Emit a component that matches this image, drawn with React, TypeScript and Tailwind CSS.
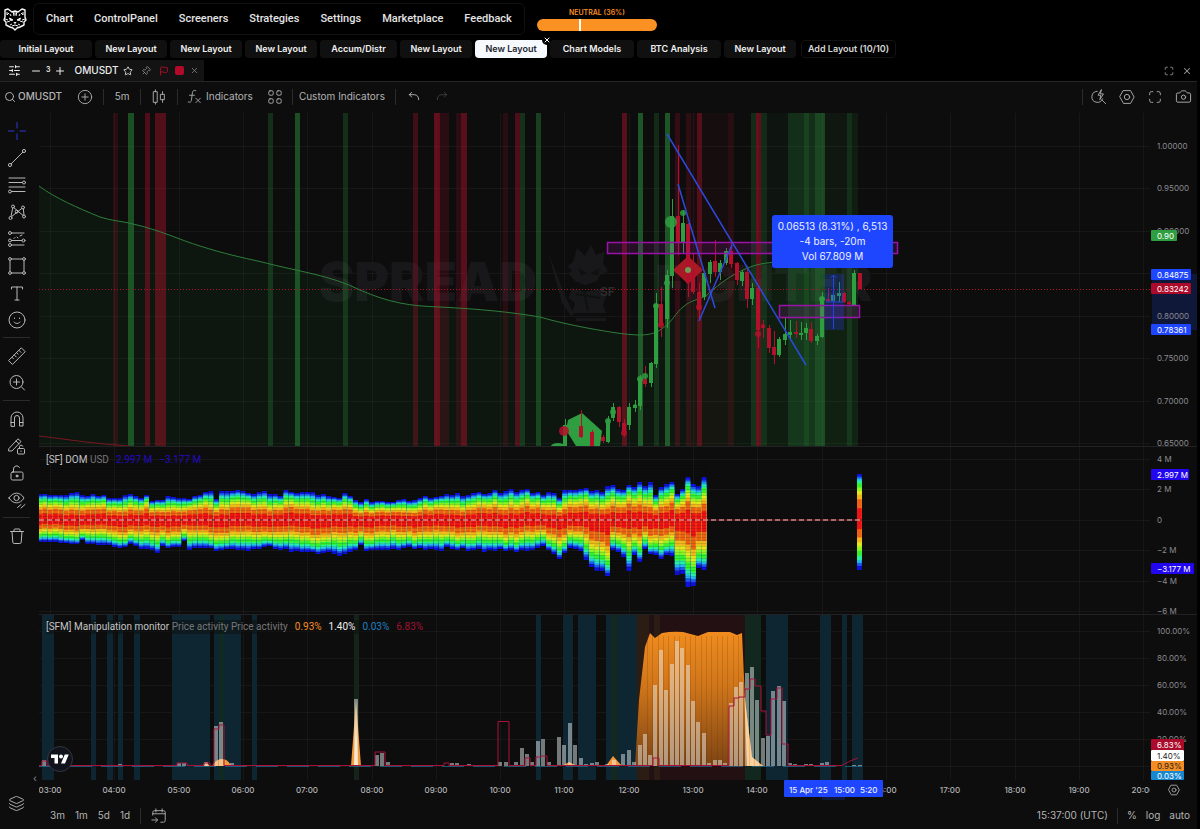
import type { ReactNode } from "react";
import { Camera, Flag, Layers, Maximize, Minus, Pin, Plus, Search, SlidersHorizontal, Star, X } from "lucide-react";

const GREEN = "#2f9e41";
const RED = "#b3102c";
const TEAL = "#0d2631";

const navItems = ["Chart", "ControlPanel", "Screeners", "Strategies", "Settings", "Marketplace", "Feedback"];

const layouts = [
  { name: "Initial Layout", width: "w-[92px]" },
  { name: "New Layout", width: "w-[72px]" },
  { name: "New Layout", width: "w-[72px]" },
  { name: "New Layout", width: "w-[72px]" },
  { name: "Accum/Distr", width: "w-[77px]" },
  { name: "New Layout", width: "w-[72px]" },
  { name: "New Layout", width: "w-[72px]", active: true },
  { name: "Chart Models", width: "w-[84px]" },
  { name: "BTC Analysis", width: "w-[84px]" },
  { name: "New Layout", width: "w-[72px]" },
];

// [x, width, color, opacity]
type Band = [number, number, string, number];

const priceBands: Band[] = [
  [113, 5, RED, 0.18], [128, 6, GREEN, 0.45], [145, 5, RED, 0.4], [155, 11, RED, 0.42],
  [268, 5, GREEN, 0.24], [295, 5, GREEN, 0.45], [343, 5, GREEN, 0.24],
  [413, 5, RED, 0.3], [434, 6, RED, 0.5], [440, 9, RED, 0.18], [456, 5, RED, 0.18], [461, 6, RED, 0.46],
  [503, 5, RED, 0.18], [515, 5, RED, 0.4], [520, 5, GREEN, 0.25], [536, 5, GREEN, 0.35],
  [622, 5, RED, 0.46], [638, 5, GREEN, 0.5], [654, 5, GREEN, 0.2], [665, 5, GREEN, 0.5],
  [675, 5, RED, 0.24], [686, 5, RED, 0.2], [691, 6, RED, 0.08], [697, 5, RED, 0.44], [702, 26, RED, 0.05],
  [728, 6, RED, 0.17], [751, 5, GREEN, 0.2], [756, 5, RED, 0.5], [761, 6, GREEN, 0.2], [767, 21, GREEN, 0.05],
  [788, 16, GREEN, 0.24], [804, 5, GREEN, 0.36], [809, 6, GREEN, 0.24], [815, 10, GREEN, 0.4],
  [825, 22, GREEN, 0.08], [847, 5, GREEN, 0.24], [852, 6, GREEN, 0.1],
];

// [x, high, body top, body bottom, low, up]
const candles: number[][] = [
  [565, 419, 425, 446, 446, 1], [581, 410, 426, 437, 438, 0], [592, 430, 432, 446, 446, 0], [603, 435, 437, 441, 443, 0],
  [608, 416, 420, 442, 443, 1], [613, 403, 407, 418, 421, 1], [619, 406, 407, 422, 427, 0], [624, 419, 423, 432, 437, 0],
  [629, 403, 407, 425, 430, 1], [635, 400, 405, 408, 412, 1], [640, 375, 378, 406, 410, 1], [645, 366, 379, 384, 387, 0],
  [651, 362, 363, 383, 387, 1], [656, 293, 304, 364, 368, 1], [661, 287, 304, 325, 337, 0], [667, 270, 275, 319, 328, 1],
  [672, 199, 216, 276, 288, 1], [678, 145, 216, 243, 255, 0], [683, 210, 223, 243, 253, 1], [688, 223, 224, 283, 297, 0],
  [693, 253, 270, 292, 294, 0], [699, 283, 292, 310, 320, 0], [704, 271, 273, 297, 300, 1], [710, 260, 262, 274, 283, 1],
  [715, 240, 261, 272, 277, 0], [720, 260, 263, 272, 280, 1], [726, 248, 251, 263, 265, 1], [731, 242, 251, 264, 268, 0],
  [737, 262, 263, 280, 285, 0], [742, 270, 272, 281, 286, 1], [747, 268, 272, 299, 308, 0], [752, 283, 288, 299, 305, 1],
  [758, 286, 288, 330, 348, 0], [763, 320, 325, 328, 338, 0], [769, 325, 328, 348, 353, 0], [774, 331, 347, 355, 364, 0],
  [779, 337, 339, 355, 357, 1], [785, 318, 334, 340, 345, 1], [790, 320, 332, 335, 340, 1], [796, 321, 332, 334, 338, 0],
  [801, 322, 333, 335, 340, 1], [806, 323, 328, 333, 340, 1], [811, 322, 329, 341, 343, 0], [817, 334, 336, 341, 345, 1],
  [822, 292, 297, 337, 338, 1], [828, 288, 299, 301, 302, 0], [833, 288, 295, 301, 303, 1], [839, 282, 293, 296, 302, 1],
  [844, 292, 293, 302, 303, 0], [849, 301, 302, 304, 305, 0], [854, 270, 273, 305, 305, 1], [860, 273, 273, 289, 289, 0],
];

// [cx, cy, r, up]
const markers: number[][] = [
  [671, 222, 6, 1], [683, 213, 3, 1], [667, 283, 3, 1], [656, 306, 3, 1], [661, 325, 3, 0], [640, 379, 3, 1],
  [645, 376, 3, 1], [624, 433, 3, 0], [564, 431, 5, 0], [608, 421, 3, 1], [613, 412, 3, 1], [635, 406, 2, 1],
  [603, 439, 2, 0], [758, 334, 3, 0], [763, 326, 2, 0], [699, 307, 3, 0], [822, 299, 3, 1], [572, 422, 3, 1],
];

const domUp = [
  26, 26, 25, 25, 25, 25, 27, 28, 25, 24, 26, 24, 25, 22, 22, 22, 25, 26, 24, 22, 25, 19, 20, 20, 24, 23, 22, 22, 21, 24, 25,
  28, 29, 21, 29, 29, 29, 30, 29, 27, 26, 28, 29, 26, 26, 24, 30, 28, 27, 28, 28, 28, 25, 26, 24, 23, 22, 27, 24, 20, 18, 21,
  18, 19, 19, 18, 18, 20, 21, 19, 20, 22, 24, 22, 23, 24, 26, 25, 27, 24, 25, 27, 28, 26, 27, 30, 27, 29, 31, 28, 30, 31, 27,
  28, 25, 28, 27, 22, 30, 30, 30, 31, 32, 29, 30, 28, 34, 35, 31, 30, 35, 33, 38, 34, 38, 25, 33, 36, 38, 26, 31, 43, 36, 34,
  43,
];

const domDown = [
  22, 22, 22, 22, 23, 23, 24, 24, 20, 24, 24, 25, 25, 25, 27, 28, 27, 24, 26, 29, 29, 30, 33, 26, 28, 27, 27, 21, 30, 28, 28,
  28, 28, 31, 30, 29, 29, 30, 30, 31, 29, 29, 27, 26, 29, 30, 29, 32, 31, 32, 32, 32, 34, 33, 32, 34, 36, 34, 32, 30, 25, 31,
  30, 30, 30, 30, 29, 30, 28, 27, 29, 28, 30, 29, 30, 31, 27, 29, 30, 28, 31, 30, 29, 32, 30, 31, 29, 31, 30, 32, 30, 31, 30,
  28, 26, 30, 34, 39, 33, 28, 29, 31, 40, 47, 51, 51, 56, 30, 32, 37, 51, 35, 42, 29, 34, 35, 39, 35, 36, 55, 54, 67, 66, 48,
  50,
];

// share of the column, counted from the middle outwards
const heat: [number, string][] = [
  [1, "#0d12dc"], [0.93, "#1d5cf0"], [0.88, "#22b8ec"], [0.83, "#27f0a0"], [0.76, "#35f32a"], [0.66, "#96f322"],
  [0.58, "#e6e51e"], [0.5, "#f3b51a"], [0.4, "#ee6014"], [0.22, "#ee1216"],
];

const manipBands: Band[] = [
  [42, 12, TEAL, 1], [91, 5, TEAL, 1], [107, 6, TEAL, 1], [118, 5, TEAL, 1], [134, 6, TEAL, 1],
  [172, 38, TEAL, 1], [214, 27, TEAL, 1], [219, 5, "#0f2a22", 1], [252, 5, TEAL, 1], [354, 5, "#14241a", 1],
  [536, 5, TEAL, 1], [563, 10, TEAL, 1], [578, 18, TEAL, 1], [606, 31, TEAL, 1], [612, 5, "#14281d", 1],
  [637, 12, "#2c1d14", 1], [649, 5, "#231012", 1], [654, 6, "#2c1d14", 1], [660, 85, "#231012", 1], [745, 16, "#12281f", 1],
  [766, 22, TEAL, 1], [820, 11, TEAL, 1], [842, 5, TEAL, 1], [852, 11, TEAL, 1],
];

// [x, height]
const volume: number[][] = [
  [42, 6], [118, 2], [177, 3], [182, 3], [204, 4], [214, 40], [219, 44], [230, 3], [278, 1], [354, 67], [375, 11], [380, 13],
  [386, 4], [391, 1], [450, 3], [455, 3], [467, 2], [498, 4], [504, 4], [514, 4], [520, 18], [525, 12], [530, 4], [536, 25],
  [541, 27], [547, 4], [557, 29], [562, 21], [568, 43], [573, 21], [579, 8], [584, 2], [590, 3], [595, 4], [605, 2], [612, 6],
  [621, 12], [627, 16], [632, 4], [638, 21], [643, 32], [648, 11], [653, 81], [659, 116], [664, 76], [670, 102], [675, 125],
  [680, 118], [686, 101], [691, 65], [696, 44], [702, 33], [707, 3], [713, 6], [718, 6], [723, 3], [729, 63], [734, 79],
  [739, 84], [745, 93], [750, 99], [755, 66], [761, 28], [766, 30], [771, 75], [777, 80], [782, 65], [788, 3], [793, 2],
  [804, 2], [809, 2], [820, 3], [825, 4], [831, 1], [852, 1], [858, 1],
];

const hours = Array.from({ length: 18 }, (_, i) => ({ label: `${String(i + 3).padStart(2, "0")}:00`, x: Math.round(50 + i * 64.3) }));

function Icon({ children, size = 18 }: { children: ReactNode; size?: number }) {
  return (
    <svg
      width={size}
      height={size}
      viewBox="0 0 18 18"
      fill="none"
      stroke="currentColor"
      strokeWidth="1"
      strokeLinecap="round"
      strokeLinejoin="round"
      aria-hidden="true"
    >
      {children}
    </svg>
  );
}

function SettingsHex() {
  return (
    <>
      <path d="M5 1.8h8L17 9l-4 7.2H5L1 9z" />
      <circle cx="9" cy="9" r="3" />
    </>
  );
}

const toolGroups: { label: string; icon: ReactNode }[][] = [
  [
    { label: "Crosshair", icon: <path d="M9 0v6M9 12v6M0 9h6M12 9h6" stroke="#2c39d6" /> },
    { label: "Trend line", icon: <><circle cx="2" cy="16" r="1.6" /><circle cx="16" cy="2" r="1.6" /><path d="M3.2 14.8 14.8 3.2" /></> },
    { label: "Fib retracement", icon: <><path d="M1 2h16M1 6.5h13.5M1 11h16M3.5 15.5H17" /><circle cx="16" cy="6.5" r="1.5" /><circle cx="2" cy="15.5" r="1.5" /></> },
    { label: "Patterns", icon: <><path d="m3 13.5 1.7-8.5M6 4.8l9 7.6M15.3 6l.7 6M13.7 5.5l-10 8" /><circle cx="5" cy="3.5" r="1.5" /><circle cx="15" cy="4.5" r="1.5" /><circle cx="8.7" cy="8.7" r="1.5" /><circle cx="2.5" cy="15" r="1.5" /><circle cx="16" cy="13.5" r="1.5" /></> },
    { label: "Forecasting", icon: <><circle cx="2" cy="3" r="1.5" /><circle cx="2" cy="10.5" r="1.5" /><circle cx="2" cy="15" r="1.5" /><circle cx="15.5" cy="10.5" r="1.5" /><path d="M3.5 3H16M3.5 10.5H14M3.5 15H16" /><path d="m6 8.500 1-1M9 7l1 1M12 6l2-1" /></> },
    { label: "Shapes", icon: <><path d="M3.5 2h11M3.5 16h11M2 3.5v11M16 3.5v11" /><circle cx="2" cy="2" r="1.4" /><circle cx="16" cy="2" r="1.4" /><circle cx="2" cy="16" r="1.4" /><circle cx="16" cy="16" r="1.4" /></> },
    { label: "Text", icon: <path d="M3.5 5V3h11v2M9 3v13M7 16h4" /> },
    { label: "Emoji", icon: <><circle cx="9" cy="9" r="8" /><path d="M6.5 7v.5M11.5 7v.5M6 11c1.500 2 4.500 2 6 0" /></> },
  ],
  [
    { label: "Measure", icon: <path d="M.8 13.300 13.300.8l3.900 3.900L4.700 17.200zM4 10.300l1.500 1.500M6.300 8l2 2M8.600 5.700l1.500 1.500M11 3.400l2 2" /> },
    { label: "Zoom in", icon: <><circle cx="8.5" cy="8" r="6.5" /><path d="m13.300 12.700 3.200 3.300M5.5 8h6M8.5 5v6" /></> },
  ],
  [
    { label: "Magnet", icon: <path d="M3 16V8a6 6 0 0 1 12 0v8h-3.5V8a2.500 2.500 0 0 0-5 0v8zM3 12.500h3.500M11.500 12.500H15" /> },
    { label: "Stay in drawing mode", icon: <><path d="M1 11.500 10 1.800l3 2.700L4 14H1zM8 4l3 2.800" /><rect x="9.5" y="11.5" width="7" height="5.5" rx="1" /><path d="M11.500 11.500V9.800a1.700 1.700 0 0 1 3.300-.5M13 14v.5" /></> },
    { label: "Lock all drawings", icon: <><rect x="3" y="8" width="12" height="8" rx="1.5" /><path d="M5.500 8V5a3.200 3.200 0 0 1 6-1.500" /><circle cx="9" cy="12" r="1" fill="currentColor" /></> },
    { label: "Hide all drawings", icon: <><path d="M1 7c4-6.500 11-6.500 15 0-4 6.500-11 6.500-15 0z" /><circle cx="8.5" cy="7" r="2.6" /><path d="m9.500 16.500 3.500-3M13 17l4-3.500" /></> },
  ],
  [
    { label: "Remove objects", icon: <path d="M2.500 4.500h13M6 4.500V2.800Q6 2 7 2h4q1 0 1 .8v1.700M4 4.500l.8 10.700q.1 1.300 1.400 1.300h5.600q1.300 0 1.400-1.300L14 4.500" /> },
  ],
];

function CatLogo() {
  return (
    <svg width="24" height="24" viewBox="0 0 24 24" fill="none" stroke="#f5f5f5" strokeLinejoin="round" aria-hidden="true">
      <path d="M2 10V3l3-1 4 3 3-1 3 1 4-3 3 1v7l1 3-2 2v3l-4 2-3 1-2 2-2-2-3-1-4-2v-3l-2-2z" strokeWidth="1.4" />
      <path d="M4 5v3l2-2M20 5v3l-2-2M10 4l1 5M14 4l-1 5M12 5v3M7 7l1 2M17 7l-1 2M2 12l3 1M22 12l-3 1M4 15l3-1M20 15l-3-1M7 18l2-1M17 18l-2-1M9 19l3-1 3 1" />
      <path d="m6.500 11 3.500 2-2.500.5zM17.500 11 14 13l2.500.5zM11 15.500h2l-1 1z" fill="#f5f5f5" />
    </svg>
  );
}

function Header() {
  return (
    <header className="flex h-[38px] items-start">
      <a href="#" aria-label="Home" className="mt-[7px] ml-[3px]">
        <CatLogo />
      </a>
      <nav className="mt-[3px] ml-[6px] flex h-8 items-center gap-[21px] rounded-md border border-[#111113] px-3 font-['Roboto',sans-serif] text-[11px] font-medium text-[#e4e4e4]">
        {navItems.map((item) => (
          <a key={item} href="#">{item}</a>
        ))}
      </nav>
      <div className="mt-2 ml-3 w-[120px] text-center">
        <p className="text-[7px] leading-[9px] font-semibold text-[#f58d22]">NEUTRAL (36%)</p>
        <div className="mt-[2px] flex h-3 rounded-full bg-[#fb9023]">
          <div className="w-[37%] border-r-2 border-white" />
        </div>
      </div>
    </header>
  );
}

function LayoutTabs() {
  return (
    <div className="flex h-[22px] items-center gap-[3px] text-[9px] font-semibold">
      {layouts.map((tab, i) => (
        <div key={i} className={`relative ${tab.width}`}>
          <button
            className={
              tab.active
                ? "h-[18px] w-full rounded-[4px] bg-[#f6f9fd] text-[#1c2430]"
                : "h-[18px] w-full rounded-[4px] bg-[#101010] text-[#f0f0f0]"
            }
          >
            {tab.name}
          </button>
          {tab.active && (
            <button aria-label="Close layout" className="absolute -top-[5px] -right-[5px] rounded-full bg-black p-px text-white">
              <X size={8} strokeWidth={3} />
            </button>
          )}
        </div>
      ))}
      <button className="ml-[2px] h-[18px] w-[95px] rounded-[4px] border border-[#121212] text-[#d8d8d8]">Add Layout (10/10)</button>
    </div>
  );
}

function WindowBar() {
  return (
    <div className="flex h-[21px] items-center justify-between">
      <div className="flex h-full w-[204px] items-center bg-[#131313] pl-[8px] text-[#ededed]">
        <button aria-label="Adjust"><SlidersHorizontal size={13} /></button>
        <button aria-label="Decrease" className="ml-[9px]"><Minus size={12} /></button>
        <span className="ml-1 text-[7px] font-semibold">3</span>
        <button aria-label="Increase" className="ml-1"><Plus size={12} /></button>
        <span className="ml-2 text-[10px] font-medium">OMUSDT</span>
        <button aria-label="Favourite" className="ml-1"><Star size={10} /></button>
        <button aria-label="Pin" className="ml-2 text-[#8a8a8a]"><Pin size={10} className="rotate-45" /></button>
        <button aria-label="Flag" className="ml-2 text-[#c3102c]"><Flag size={10} /></button>
        <button aria-label="Colour" className="ml-[6px] size-[9px] rounded-[2px] bg-[#b40a2a]" />
        <button aria-label="Close tab" className="ml-[6px] text-[#8a8a8a]"><X size={9} /></button>
      </div>
      <div className="flex gap-2 pr-2 text-[#9a9a9a]">
        <button aria-label="Maximize"><Maximize size={10} /></button>
        <button aria-label="Close"><X size={10} strokeWidth={2.5} /></button>
      </div>
    </div>
  );
}

function Divider() {
  return <span className="h-4 w-px bg-[#2b2b2b]" />;
}

function Toolbar() {
  return (
    <div className="mr-[3px] flex h-8 items-center justify-between border-t border-[#262628] bg-[#0d0d0d] pb-[2px] text-[10px] text-[#b4b4b4]">
      <div className="flex items-center">
        <button className="ml-[4px] flex items-center gap-[2px] font-medium"><Search size={12} />OMUSDT</button>
        <button aria-label="Compare" className="mr-[10px] ml-[15px]">
          <Icon size={16}><circle cx="9" cy="9" r="7.5" /><path d="M9 5.500v7M5.500 9h7" /></Icon>
        </button>
        <Divider />
        <button className="w-9">5m</button>
        <Divider />
        <button aria-label="Candles" className="flex w-9 justify-center">
          <Icon size={16}><path d="M5 1v2M5 15v2M3 3h4v12H3zM13 3v3M13 12v3M11 6h4v6h-4z" /></Icon>
        </button>
        <Divider />
        <button className="ml-[9px] flex items-center gap-1">
          <Icon size={15}><path d="M10.500 2C8 1 6.800 2 6.500 4.500l-1.200 9C5 16 3.500 16.500 1.500 15.500M3 7.500h6M10.500 11l5.500 5.500M16 11l-5.500 5.500" /></Icon>
          Indicators
        </button>
        <button aria-label="Layouts" className="mr-[9px] ml-[14px]">
          <Icon size={16}><rect x="2" y="2" width="5" height="5" rx="1.5" /><rect x="11" y="2" width="5" height="5" rx="1.5" /><rect x="2" y="11" width="5" height="5" rx="1.5" /><rect x="11" y="11" width="5" height="5" rx="1.5" /></Icon>
        </button>
        <Divider />
        <button className="mr-1 px-[6px]">Custom Indicators</button>
        <Divider />
        <button aria-label="Undo" className="ml-3">
          <Icon size={12}><path d="M5.500 2 2 5.500 5.500 9M2 5.500h7.500Q16 6 16 13" strokeWidth="1.4" /></Icon>
        </button>
        <button aria-label="Redo" className="ml-4 text-[#404040]">
          <Icon size={12}><path d="M12.500 2 16 5.500 12.500 9M16 5.500H8.500Q2 6 2 13" strokeWidth="1.4" /></Icon>
        </button>
      </div>
      <div className="flex items-center gap-3 pr-[5px]">
        <Divider />
        <button aria-label="Quick search" className="-ml-1">
          <Icon size={16}><path d="M7 2.600A6.200 6.200 0 1 0 13 11M12.500 12.500l4 4M11.500 1 8 7h3l-1 5 4-6.500h-3z" /></Icon>
        </button>
        <button aria-label="Settings"><Icon size={16}><SettingsHex /></Icon></button>
        <button aria-label="Fullscreen">
          <Icon size={16}><path d="M3 6.500V5q0-2 2-2h1.500M11.500 3H13q2 0 2 2v1.500M15 11.500V13q0 2-2 2h-1.500M6.500 15H5q-2 0-2-2v-1.500" /></Icon>
        </button>
        <button aria-label="Take a snapshot"><Camera size={17} strokeWidth={1.3} /></button>
      </div>
    </div>
  );
}

function SideTools() {
  return (
    <aside className="flex w-[33px] shrink-0 flex-col items-center pt-1 text-[#b8b8b8]">
      {toolGroups.map((group, i) => (
        <div key={i} className="flex flex-col items-center">
          {i > 0 && <span className="my-1 h-px w-[27px] bg-[#2b2b2b]" />}
          {group.map((tool) => (
            <button key={tool.label} aria-label={tool.label} className="flex h-[27px] w-[33px] items-center justify-center">
              <Icon>{tool.icon}</Icon>
            </button>
          ))}
        </div>
      ))}
      <button aria-label="Object tree" className="mt-auto mb-[17px]"><Layers size={17} strokeWidth={1.3} /></button>
    </aside>
  );
}

function Grid({ top, height, rows }: { top: number; height: number; rows: number[] }) {
  return (
    <g stroke="#ffffff" strokeOpacity="0.045">
      {hours.map(({ x }) => <path key={x} d={`M${x}.5 ${top}v${height}`} />)}
      {rows.map((y) => <path key={y} d={`M39 ${y}.5h3000`} />)}
    </g>
  );
}

function Bands({ bands, top, height }: { bands: Band[]; top: number; height: number }) {
  return (
    <>
      {bands.map(([x, w, fill, opacity]) => (
        <rect key={x} x={x} y={top} width={w} height={height} fill={fill} opacity={opacity} />
      ))}
    </>
  );
}

function Ticks({ ticks }: { ticks: [string, number][] }) {
  return (
    <>
      {ticks.map(([label, y]) => (
        <text key={label} x="1157" y={y + 3} fill="#8b8b8f" fontSize="8">{label}</text>
      ))}
    </>
  );
}

function Tag({ y, w = 40, h = 11, fill, color = "#fff", children }: { y: number; w?: number; h?: number; fill: string; color?: string; children: string }) {
  return (
    <>
      <rect x="1151" y={y} width={w} height={h} rx="1" fill={fill} />
      <text x="1157" y={y + h / 2 + 3} fill={color} fontSize="8">{children}</text>
    </>
  );
}

// Chart area with its value scale; both are drawn in one shared coordinate space.
function Pane({ top, className, plot, axis, children }: { top: number; className: string; plot: ReactNode; axis: ReactNode; children?: ReactNode }) {
  return (
    <section className={`relative flex ${className}`}>
      <svg className="h-full min-w-0 flex-1"><g transform={`translate(-39 ${-top})`}>{plot}</g></svg>
      <svg className="h-full w-[47px] shrink-0"><g transform={`translate(-1150 ${-top})`}>{axis}</g></svg>
      {children}
    </section>
  );
}

function Watermark() {
  return (
    <g fill="#18181a">
      <g fontWeight="900" fontSize="53">
        <text x="319" y="301">SPREAD</text>
        <text x="655" y="301" fontSize="50">FIGHTER</text>
      </g>
      <path d="M573 262l4-14 8 8 6-11 5 10 9-4-2 12 5 8-8 4-3 6-12 4-10-4-6-7 3-4-5-3z" />
      <path d="M572 288l12 4 16-3 6 8-3 8 3 8h-34l3-10-6-5z" />
      <path d="M548 252l18 46 8 16-3 2-9-13zM576 318h30v3h-30z" />
      <path d="M580 270l5 3-4 1zM598 270l-5 3 4 1zM576 294l24 4M584 291l4 20" stroke="#0e120e" strokeWidth="2" />
      <text x="600" y="296" fill="#2a2a2b" fontSize="12" fontWeight="700">SF</text>
    </g>
  );
}

const maLine =
  "M39 186C55 198 78 208 100 217C112 221 122 221 133 224C160 230 180 240 200 246C225 254 240 257 262 262C300 272 330 275 360 290C390 303 410 306 440 307C480 309 510 312 540 317C560 323 590 329 617 333C640 336 650 336 660 330C672 323 676 312 683 307C692 299 700 300 707 295C720 283 735 272 753 266C765 262 775 263 785 260C810 255 840 240 858 236";

function PricePane() {
  return (
    <Pane
      top={113}
      className="h-[334px] border-b border-[#222226]"
      plot={
        <>
          <Grid top={113} height={334} rows={[146, 188, 231, 273, 316, 358, 401, 443]} />
          <Watermark />
          <path d={`${maLine}V447H39Z`} fill="#1f7a2c" fillOpacity="0.1" />
          <Bands bands={priceBands} top={113} height={334} />
          <path d={maLine} fill="none" stroke="#2f7d3a" />
          <path d="M39 436C65 439 95 444 130 446" fill="none" stroke="#7a1622" />
          <path d="M39 289.5h3000" stroke="#b0122c" strokeDasharray="1 2" />
          <path d="M568 420l14-7 20 18-2 15h-24l-10-16z" fill={GREEN} />
          <ellipse cx="558" cy="446" rx="7" ry="3" fill={GREEN} />
          <path d="M688 256l15 14-15 14-15-14z" fill="#a81a24" />
          {candles.map(([x, high, open, close, low, up]) => (
            <g key={x} fill={up ? GREEN : RED}>
              <rect x={x} y={high} width="1" height={low - high} />
              <rect x={x - 2} y={open} width="4" height={Math.max(close - open, 1)} />
            </g>
          ))}
          {markers.map(([cx, cy, r, up]) => (
            <circle key={`${cx}-${cy}`} cx={cx} cy={cy} r={r} fill={up ? GREEN : RED} fillOpacity="0.85" />
          ))}
          <circle cx="688" cy="270" r="3" fill="#6f9a58" />
          <g fill="#a020b0" fillOpacity="0.16" stroke="#9b12a8" strokeWidth="1.5">
            <rect x="607.5" y="242.5" width="290" height="11" />
            <rect x="779.5" y="305.5" width="80" height="12" />
          </g>
          <rect x="825" y="274" width="19" height="56" fill="#2742ff" fillOpacity="0.25" />
          <path d="M833.5 329V275M830.5 278l3-3 3 3M826 302h17" fill="none" stroke="#2742d8" />
          <g stroke="#2c4bdc" strokeWidth="1.5">
            <path d="M667 134 806 365" />
            <path d="m678 184 37 124" />
            <path d="m699 321 33-76" />
          </g>
        </>
      }
      axis={
        <>
          <rect x="1152" y="274" width="46" height="56" fill="#10183a" />
          <Ticks ticks={[["1.00000", 146], ["0.95000", 188], ["0.90000", 231], ["0.80000", 316], ["0.75000", 358], ["0.70000", 401], ["0.65000", 443]]} />
          <Tag y={230} w={26} fill="#2f9e41">0.90</Tag>
          <Tag y={269} fill="#1f46ff">0.84875</Tag>
          <Tag y={283} fill="#ab0a2b">0.83242</Tag>
          <Tag y={324} fill="#1f46ff">0.78361</Tag>
        </>
      }
    >
      <div className="absolute top-[102px] left-[733px] w-[121px] rounded-[3px] bg-[#1f46ff] py-1 text-center text-[10px] leading-[15px] text-[#eef1ff]">
        <p>0.06513 (8.31%) , 6,513</p>
        <p>-4 bars, -20m</p>
        <p>Vol 67.809 M</p>
      </div>
    </Pane>
  );
}

function HeatColumn({ x, up, down, seed }: { x: number; up: number; down: number; seed: number }) {
  const sway = Math.sin(seed * 0.7) * 0.6 + Math.sin(seed * 2.3) * 0.4;
  return (
    <>
      {heat.map(([share, fill]) => {
        const shift = 0.28 * sway * (1 - share);
        const a = up * share * (1 + shift);
        const b = down * share * (1 - shift);
        return <rect key={fill} x={x} y={520 - a} width="4.8" height={a + b} fill={fill} />;
      })}
    </>
  );
}

function DomPane() {
  return (
    <Pane
      top={447}
      className="h-[168px] border-b border-[#222226]"
      plot={
        <>
          <Grid top={447} height={168} rows={[459, 489, 520, 550, 581, 611]} />
          {domUp.map((up, i) => (
            <HeatColumn key={i} x={37 + i * 5.36} up={up} down={domDown[i]} seed={i} />
          ))}
          <HeatColumn x={857} up={46} down={50} seed={3} />
          <g stroke="#000" strokeOpacity="0.12">
            {Array.from({ length: 40 }, (_, i) => <path key={i} d={`M39 ${462.5 + i * 3}h668`} />)}
          </g>
          <path d="M39 520h823" stroke="#8a1018" />
          <path d="M39 520h823" stroke="#f0c8c8" strokeDasharray="5 3" />
        </>
      }
      axis={
        <>
          <Ticks ticks={[["4 M", 459], ["2 M", 489], ["0", 520], ["−2 M", 550], ["−4 M", 581], ["−6 M", 611]]} />
          <Tag y={469} w={38} fill="#2306f0">2.997 M</Tag>
          <Tag y={563} w={43} fill="#2306f0">−3.177 M</Tag>
        </>
      }
    >
      <div className="absolute top-[5px] left-[7px] flex gap-[7px] font-['Roboto',sans-serif] text-[10px] leading-[15px]">
        <span className="text-[#c4c4c4]">[SF] DOM <span className="text-[#77777a]">USD</span></span>
        <span className="text-[#2409c4]">2.997 M</span>
        <span className="text-[#2409c4]">−3.177 M</span>
      </div>
    </Pane>
  );
}

function ManipulationPane() {
  return (
    <Pane
      top={615}
      className="h-[165px]"
      plot={
        <>
          <defs>
            <linearGradient id="pressure" x1="0" y1="0" x2="0" y2="1">
              <stop offset="0" stopColor="#f08c1f" />
              <stop offset="0.4" stopColor="#d0761a" />
              <stop offset="1" stopColor="#7d4414" />
            </linearGradient>
          </defs>
          <Grid top={615} height={165} rows={[631, 658, 685, 712, 739, 766]} />
          <Bands bands={manipBands} top={615} height={165} />
          <path d="M635 766l4-66 6-53 5-14 5 5 7-5q10-2 21-1l15 4 10-4h22l7 3 5-2 3 67 7 57 11 9z" fill="url(#pressure)" />
          <path d="M744 690l1 10 7 57 11 9h-16z" fill="#ffb55c" />
          <g stroke="#5a300c" strokeOpacity="0.2">
            {Array.from({ length: 18 }, (_, i) => <path key={i} d={`M${Math.round(647 + i * 5.36)}.5 636v130`} />)}
          </g>
          <g fill="#f59a3a">
            <path d="M351 766l5-66 5 66z" />
            <path d="M212 766q4-7 10-7t9 7z" />
            <path d="M606 766l7-10 9 10zM562 766l7-4 8 4zM202 766l4-4 4 4z" />
          </g>
          <path d="M354 766l2-50 2 50z" fill="#ffe2b0" />
          <g fill="#eaf0f0" fillOpacity="0.48">
            {volume.map(([x, h]) => <rect key={x} x={x} y={766 - h} width="4" height={h} />)}
          </g>
          <path
            d="M39 765.5H42V761H47V765.5H177V763H187V765.5H204V763H210V765.5H214V729H219V725H224V765.5H375V752H385V765.5H444V763H449V765.5H498V721.5H509V765.5H525V758H530V765.5H536V757H541V756H547V765.5H653V758H659V765.5H729V706H734V698H739V697H745V689H750V679H755V686H761V711H766V735H771V699H777V688H782V744H788V765.5H842L850 761L858 758"
            fill="none"
            stroke="#a8123a"
          />
          <path d="M39 766.5h823" stroke="#2d8fc9" strokeOpacity="0.5" strokeDasharray="22 9" />
        </>
      }
      axis={
        <>
          <Ticks ticks={[["100.00%", 631], ["80.00%", 658], ["60.00%", 685], ["40.00%", 712], ["20.00%", 739]]} />
          <Tag y={739} w={33} fill="#ab0a2b">6.83%</Tag>
          <Tag y={750} w={33} fill="#ffffff" color="#222">1.40%</Tag>
          <Tag y={761} w={33} h={10} fill="#f58d22" color="#222">0.93%</Tag>
          <Tag y={771} w={33} h={9} fill="#1787cf">0.03%</Tag>
        </>
      }
    >
      <div className="absolute top-[5px] left-[7px] flex gap-[7px] bg-[#0d0d0d]/50 font-['Roboto',sans-serif] text-[10px] leading-[14px]">
        <span className="text-[#c4c4c4]">[SFM] Manipulation monitor <span className="text-[#77777a]">Price activity Price activity</span></span>
        <span className="text-[#f58d22]">0.93%</span>
        <span className="text-[#f0f0f0]">1.40%</span>
        <span className="text-[#2180c0]">0.03%</span>
        <span className="text-[#a01030]">6.83%</span>
      </div>
      <a href="#" aria-label="TradingView" className="absolute bottom-2 left-2 flex size-[26px] items-center justify-center rounded-full border border-[#33363f] bg-[#10131c]">
        <svg width="18" height="12" viewBox="0 4 36 18" fill="#fff" aria-hidden="true">
          <path d="M14 22H7V11H0V4h14v18zM28 22h-8l7.500-18h8L28 22z" />
          <circle cx="20" cy="8" r="4" />
        </svg>
      </a>
      <button aria-label="Scroll back" className="absolute -bottom-1 -left-[6px] text-[10px] leading-3 text-[#8b8b8f]">‹</button>
    </Pane>
  );
}

function TimeAxis() {
  return (
    <div className="flex h-5">
      <svg className="h-5 min-w-0 flex-1">
        <g transform="translate(-39 -780)" fontSize="8" fontWeight="500">
          {hours.filter(({ label }) => label !== "15:00").map(({ label, x }) => (
            <text key={x} x={x} y="793" textAnchor="middle" fill="#b4b4b6">{label}</text>
          ))}
          <rect x="822" y="780" width="23" height="20" fill="#10183a" />
          <rect x="784" y="780" width="99" height="17" rx="1" fill="#1f46ff" />
          <g fill="#eef1ff">
            <text x="789" y="793">15 Apr '25</text>
            <text x="834" y="793">15:00</text>
            <text x="860" y="793">5:20</text>
          </g>
        </g>
      </svg>
      <button aria-label="Scale settings" className="flex w-[47px] items-center justify-center text-[#9a9a9c]">
        <Icon size={12}><g strokeWidth="1.5"><SettingsHex /></g></Icon>
      </button>
    </div>
  );
}

function Footer() {
  return (
    <footer className="flex h-[29px] items-center justify-between pt-[2px] pr-[7px] pl-[11px] text-[10px] text-[#b4b4b4]">
      <div className="flex items-center gap-[10px]">
        {["3m", "1m", "5d", "1d"].map((range) => <button key={range}>{range}</button>)}
        <Divider />
        <button aria-label="Go to date">
          <Icon size={16}><path d="M2 8V5q0-2 2-2h10q2 0 2 2v9q0 2-2 2h-3M2 6.500h14M5.500 1v3.500M12.500 1v3.500M1 13.500h6M5 11l2.500 2.500L5 16" /></Icon>
        </button>
      </div>
      <div className="flex items-center gap-[9px]">
        <button>15:37:00 (UTC)</button>
        <Divider />
        <button>%</button>
        <button>log</button>
        <button>auto</button>
      </div>
    </footer>
  );
}

export default function App() {
  return (
    <div className="min-h-screen bg-black font-['Inter',sans-serif]">
      <Header />
      <LayoutTabs />
      <WindowBar />
      <Toolbar />
      <div className="mr-[3px] flex bg-[#0d0d0d]">
        <SideTools />
        <main className="min-w-0 flex-1 pl-[6px]">
          <PricePane />
          <DomPane />
          <ManipulationPane />
          <TimeAxis />
          <Footer />
        </main>
      </div>
    </div>
  );
}
